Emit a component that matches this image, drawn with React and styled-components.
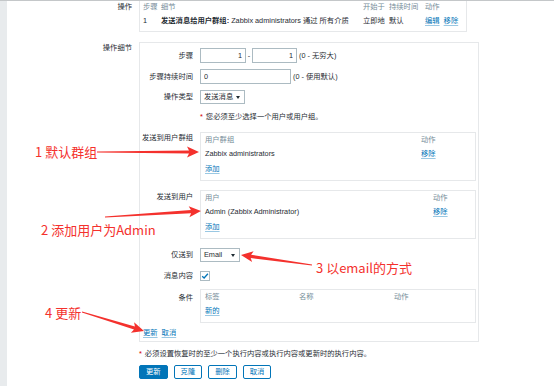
import React from "react";
import styled, { createGlobalStyle } from "styled-components";

const GlobalStyle = createGlobalStyle`
  html, body {
    margin: 0;
    padding: 0;
    background: #fff;
  }
  body {
    font-family: "Liberation Sans", Arial, "Noto Sans CJK SC", sans-serif;
    font-size: 7.3px;
    line-height: 10px;
    color: #1f2c33;
  }
`;

const Page = styled.div`
  position: relative;
  width: 554px;
  height: 386px;
  box-sizing: border-box;
  overflow: hidden;
  border-top: 1px solid #c4c7c9;
  display: flex;
`;

const Strip = styled.div`
  flex: none;
  width: 7px;
  background: #e8ebed;
`;

const Main = styled.div`
  flex: 1;
  display: flex;
  flex-direction: column;
`;

const FormRow = styled.div`
  display: grid;
  grid-template-columns: 125px auto;
  column-gap: 7px;
  align-items: start;
  margin-top: ${(p) => p.$mt || 0}px;
`;

const FormLabel = styled.div`
  text-align: right;
  white-space: nowrap;
  padding-top: ${(p) => p.$pt || 0}px;
`;

/* top operations table */
const OpsBox = styled.div`
  width: 328px;
  box-sizing: border-box;
  border: 1px solid #e6e8ea;
  border-top: none;
  padding: 1px 3px 3px;
`;

const OpsGrid = styled.div`
  display: grid;
  grid-template-columns: 18px 202px 26px 36px auto;
  grid-template-rows: 10px 14px;
  row-gap: 2px;
  align-items: center;
  white-space: nowrap;
`;

const Head = styled.span`
  color: #768d99;
`;

const Strong = styled.b`
  font-weight: bold;
`;

const Link = styled.a`
  color: #0275b8;
  text-decoration: underline;
  text-decoration-color: rgba(2, 117, 184, 0.4);
  text-underline-offset: 2px;
  cursor: pointer;
  margin-right: ${(p) => p.$mr || 0}px;
`;

/* operation details */
const DetailBox = styled.div`
  width: 340px;
  box-sizing: border-box;
  border: 1px solid #e6e8ea;
  padding: 5px 2px 3px 0;
  display: flex;
  flex-direction: column;
`;

const DRow = styled.div`
  display: grid;
  grid-template-columns: 53px 276px;
  column-gap: 7px;
  align-items: ${(p) => (p.$top ? "start" : "center")};
  height: ${(p) => p.$h}px;
  margin-top: ${(p) => p.$mt || 0}px;
`;

const DLabel = styled.div`
  text-align: right;
  white-space: nowrap;
  padding-top: ${(p) => p.$pt || 0}px;
`;

const Inline = styled.div`
  display: flex;
  align-items: center;
  gap: ${(p) => p.$gap || 0}px;
  white-space: nowrap;
`;

const TextInput = styled.input`
  width: ${(p) => p.$w}px;
  height: 15px;
  box-sizing: border-box;
  margin: 0;
  border: 1px solid #acbbc2;
  background: #fff;
  padding: 0 3px;
  font: inherit;
  color: #1f2c33;
  text-align: ${(p) => p.$align || "left"};
  outline: none;
`;

const Dash = styled.span`
  width: 6px;
  text-align: center;
`;

const SelectBox = styled.div`
  width: ${(p) => p.$w}px;
  height: 14px;
  box-sizing: border-box;
  border: 1px solid #acbbc2;
  background: #fff;
  padding: 0 4px 0 3px;
  display: flex;
  align-items: center;
  justify-content: space-between;
  white-space: nowrap;
`;

const Caret = styled.span`
  width: 0;
  height: 0;
  border-left: 2.5px solid transparent;
  border-right: 2.5px solid transparent;
  border-top: 3.5px solid #1f2c33;
`;

const Asterisk = styled.span`
  color: #d40000;
  margin-right: 3px;
`;

const InnerBox = styled.div`
  width: 276px;
  box-sizing: border-box;
  border: 1px solid #e6e8ea;
  padding: 1px 4px 4px;
`;

const InnerGrid = styled.div`
  display: grid;
  grid-template-columns: ${(p) => p.$cols};
  grid-template-rows: 12px 15px ${(p) => (p.$three ? "15px" : "")};
  align-items: center;
  white-space: nowrap;
`;

const Check = styled.div`
  width: 10px;
  height: 10px;
  box-sizing: border-box;
  border: 1px solid #acbbc2;
  background: #fff;
  display: flex;
  align-items: center;
  justify-content: center;
`;

const FormLinks = styled.div`
  display: flex;
  align-items: center;
  gap: 4px;
  padding-left: 3px;
  height: 10px;
  margin-top: ${(p) => p.$mt || 0}px;
`;

const Note = styled.div`
  white-space: nowrap;
  height: 10px;
`;

const Buttons = styled.div`
  display: flex;
  gap: 6px;
`;

const Button = styled.button`
  height: 14px;
  box-sizing: border-box;
  margin: 0;
  padding: 0 6px;
  border: 1px solid #0275b8;
  border-radius: 2px;
  background: ${(p) => (p.$primary ? "#0275b8" : "#fff")};
  color: ${(p) => (p.$primary ? "#fff" : "#0275b8")};
  font: inherit;
  line-height: 12px;
  cursor: pointer;
`;

/* red annotations */
const Overlay = styled.div`
  position: absolute;
  top: -1px;
  left: 0;
  width: 554px;
  height: 386px;
  pointer-events: none;
`;

const Callout = styled.span`
  position: absolute;
  left: ${(p) => p.$x}px;
  top: ${(p) => p.$y}px;
  font-family: "Noto Sans CJK SC", "Liberation Sans", sans-serif;
  font-size: 13px;
  line-height: 13px;
  color: #f4312d;
  white-space: nowrap;
`;

function arrowPoints([x1, y1], [x2, y2], head = 10, hw = 5.5, tw = 0.5, bw = 1.6) {
  const dx = x2 - x1;
  const dy = y2 - y1;
  const len = Math.hypot(dx, dy);
  const ux = dx / len;
  const uy = dy / len;
  const nx = -uy;
  const ny = ux;
  const bx = x2 - ux * head;
  const by = y2 - uy * head;
  const back = 2;
  const pts = [
    [x1 + nx * tw, y1 + ny * tw],
    [bx + nx * bw, by + ny * bw],
    [bx - ux * back + nx * hw, by - uy * back + ny * hw],
    [x2, y2],
    [bx - ux * back - nx * hw, by - uy * back - ny * hw],
    [bx - nx * bw, by - ny * bw],
    [x1 - nx * tw, y1 - ny * tw],
  ];
  return pts.map((p) => p.map((v) => v.toFixed(1)).join(",")).join(" ");
}

const arrows = [
  [[97, 152], [199, 152]],
  [[105, 217], [201, 211]],
  [[312, 265], [241, 255]],
  [[82, 312], [144, 331]],
];

const callouts = [
  { x: 35, y: 145, text: "1 默认群组" },
  { x: 41, y: 223, text: "2 添加用户为Admin" },
  { x: 316, y: 261, text: "3 以email的方式" },
  { x: 45, y: 306, text: "4 更新" },
];

export default function App() {
  return (
    <>
      <GlobalStyle />
      <Page>
        <Strip />
        <Main>
          <FormRow>
            <FormLabel $pt={1}>操作</FormLabel>
            <OpsBox>
              <OpsGrid>
                <Head>步骤</Head>
                <Head>细节</Head>
                <Head>开始于</Head>
                <Head>持续时间</Head>
                <Head>动作</Head>
                <span>1</span>
                <span>
                  <Strong>发送消息给用户群组:</Strong> Zabbix administrators 通过 所有介质
                </span>
                <span>立即地</span>
                <span>默认</span>
                <span>
                  <Link $mr={4}>编辑</Link>
                  <Link>移除</Link>
                </span>
              </OpsGrid>
            </OpsBox>
          </FormRow>

          <FormRow $mt={10}>
            <FormLabel $pt={1}>操作细节</FormLabel>
            <DetailBox>
              <DRow $h={15}>
                <DLabel>步骤</DLabel>
                <Inline>
                  <TextInput $w={46} $align="right" defaultValue="1" readOnly />
                  <Dash>-</Dash>
                  <TextInput $w={45} $align="right" defaultValue="1" readOnly />
                  <span>&nbsp;(0 - 无穷大)</span>
                </Inline>
              </DRow>
              <DRow $h={15} $mt={6}>
                <DLabel>步骤持续时间</DLabel>
                <Inline $gap={2}>
                  <TextInput $w={91} defaultValue="0" readOnly />
                  <span>(0 - 使用默认)</span>
                </Inline>
              </DRow>
              <DRow $h={14} $mt={6}>
                <DLabel>操作类型</DLabel>
                <Inline>
                  <SelectBox $w={45}>
                    发送消息
                    <Caret />
                  </SelectBox>
                </Inline>
              </DRow>
              <DRow $h={12} $mt={7}>
                <span />
                <Note>
                  <Asterisk>*</Asterisk>您必须至少选择一个用户或用户组。
                </Note>
              </DRow>
              <DRow $h={49} $mt={9} $top>
                <DLabel $pt={1}>发送到用户群组</DLabel>
                <InnerBox>
                  <InnerGrid $cols="216px auto" $three>
                    <Head>用户群组</Head>
                    <Head>动作</Head>
                    <span>Zabbix administrators</span>
                    <span>
                      <Link>移除</Link>
                    </span>
                    <span>
                      <Link>添加</Link>
                    </span>
                  </InnerGrid>
                </InnerBox>
              </DRow>
              <DRow $h={49} $mt={9} $top>
                <DLabel $pt={2}>发送到用户</DLabel>
                <InnerBox>
                  <InnerGrid $cols="228px auto" $three>
                    <Head>用户</Head>
                    <Head>动作</Head>
                    <span>Admin (Zabbix Administrator)</span>
                    <span>
                      <Link>移除</Link>
                    </span>
                    <span>
                      <Link>添加</Link>
                    </span>
                  </InnerGrid>
                </InnerBox>
              </DRow>
              <DRow $h={14} $mt={9}>
                <DLabel>仅送到</DLabel>
                <Inline>
                  <SelectBox $w={40}>
                    Email
                    <Caret />
                  </SelectBox>
                </Inline>
              </DRow>
              <DRow $h={10} $mt={9}>
                <DLabel>消息内容</DLabel>
                <Inline>
                  <Check>
                    <svg width="8" height="8" viewBox="0 0 8 8">
                      <path d="M1.2 4.2 L3.1 6 L6.9 1.8" fill="none" stroke="#0275b8" strokeWidth="1.3" />
                    </svg>
                  </Check>
                </Inline>
              </DRow>
              <DRow $h={34} $mt={8} $top>
                <DLabel $pt={4}>条件</DLabel>
                <InnerBox>
                  <InnerGrid $cols="94px 95px auto">
                    <Head>标签</Head>
                    <Head>名称</Head>
                    <Head>动作</Head>
                    <span>
                      <Link>新的</Link>
                    </span>
                  </InnerGrid>
                </InnerBox>
              </DRow>
              <FormLinks $mt={5}>
                <Link>更新</Link>
                <Link>取消</Link>
              </FormLinks>
            </DetailBox>
          </FormRow>

          <FormRow $mt={7}>
            <span />
            <Note>
              <Asterisk>*</Asterisk>必须设置恢复时的至少一个执行内容或执行内容或更新时的执行内容。
            </Note>
          </FormRow>
          <FormRow $mt={6}>
            <span />
            <Buttons>
              <Button $primary>更新</Button>
              <Button>克隆</Button>
              <Button>删除</Button>
              <Button>取消</Button>
            </Buttons>
          </FormRow>
        </Main>

        <Overlay>
          <svg width="554" height="386" viewBox="0 0 554 386">
            {arrows.map(([a, b], i) => (
              <polygon key={i} points={arrowPoints(a, b)} fill="#f4312d" />
            ))}
          </svg>
          {callouts.map((c) => (
            <Callout key={c.text} $x={c.x} $y={c.y}>
              {c.text}
            </Callout>
          ))}
        </Overlay>
      </Page>
    </>
  );
}
